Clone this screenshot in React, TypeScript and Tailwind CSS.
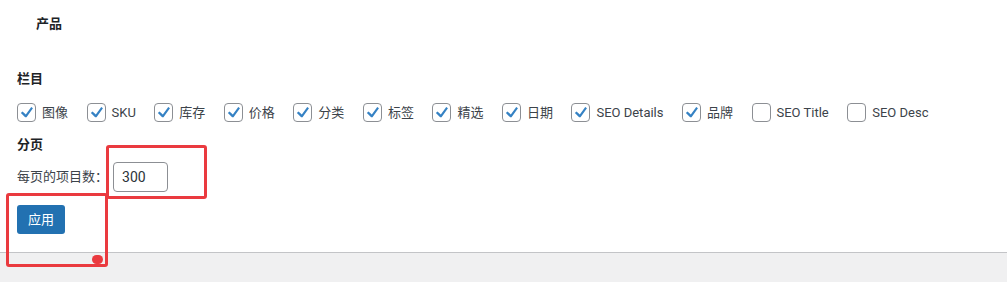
import React from 'react';

const COLUMNS: { label: string; checked: boolean }[] = [
  { label: '图像', checked: true },
  { label: 'SKU', checked: true },
  { label: '库存', checked: true },
  { label: '价格', checked: true },
  { label: '分类', checked: true },
  { label: '标签', checked: true },
  { label: '精选', checked: true },
  { label: '日期', checked: true },
  { label: 'SEO Details', checked: true },
  { label: '品牌', checked: true },
  { label: 'SEO Title', checked: false },
  { label: 'SEO Desc', checked: false },
];

const Checkbox = ({ checked }: { checked: boolean }) => (
  <span className="flex h-[19px] w-[19px] shrink-0 items-center justify-center rounded-[4px] border border-[#8c8f94] bg-white">
    {checked && (
      <svg viewBox="0 0 20 20" className="h-[19px] w-[19px]">
        <path
          d="M15.6 3.6l2 1.5-7.6 10.6H8.4L3.4 10.5l1.9-1.8 3.9 3.7z"
          fill="#3582c4"
        />
      </svg>
    )}
  </span>
);

export default function App() {
  return (
    <div
      className="relative h-[282px] w-[1007px] overflow-hidden bg-[#f0f0f1] text-[13px] text-[#3c434a]"
      style={{ fontFamily: 'Roboto, "Noto Sans CJK SC", sans-serif' }}
    >
      <div className="h-[253px] border-b border-[#c3c4c7] bg-white pl-[17px] pt-[15px]">
        <div className="pl-[19px] text-[13px] font-bold leading-[18px] text-[#1d2327]">
          产品
        </div>

        <div className="mt-[37px] text-[13px] font-bold leading-[18px] text-[#1d2327]">
          栏目
        </div>

        <div className="mt-[15px] flex h-[19px] items-center">
          {COLUMNS.map((col) => (
            <label
              key={col.label}
              className="mr-[18.5px] flex items-center gap-[6px] leading-[19px]"
            >
              <Checkbox checked={col.checked} />
              <span>{col.label}</span>
            </label>
          ))}
        </div>

        <div className="mt-[14px] text-[13px] font-bold leading-[18px] text-[#1d2327]">
          分页
        </div>

        <div className="mt-[8px] flex items-center gap-[5px]">
          <span className="leading-[30px]">每页的项目数：</span>
          <input
            readOnly
            value="300"
            className="h-[30px] w-[55px] rounded-[4px] border border-[#8c8f94] bg-white px-[8px] text-[14px] text-[#2c3338] outline-none"
          />
        </div>

        <button
          type="button"
          className="mt-[13px] h-[29px] w-[48px] rounded-[3px] bg-[#2271b1] text-[13px] text-white"
        >
          应用
        </button>
      </div>

      {/* annotation boxes */}
      <div className="absolute left-[106px] top-[145px] h-[54px] w-[101px] rounded-[3px] border-[3px] border-[#ea3a3f]" />
      <div className="absolute left-[6px] top-[193px] h-[74px] w-[102px] rounded-[3px] border-[3px] border-[#ea3a3f]" />
      <div className="absolute left-[92px] top-[255px] h-[9px] w-[11px] rounded-full bg-[#ea3a3f]" />
    </div>
  );
}
